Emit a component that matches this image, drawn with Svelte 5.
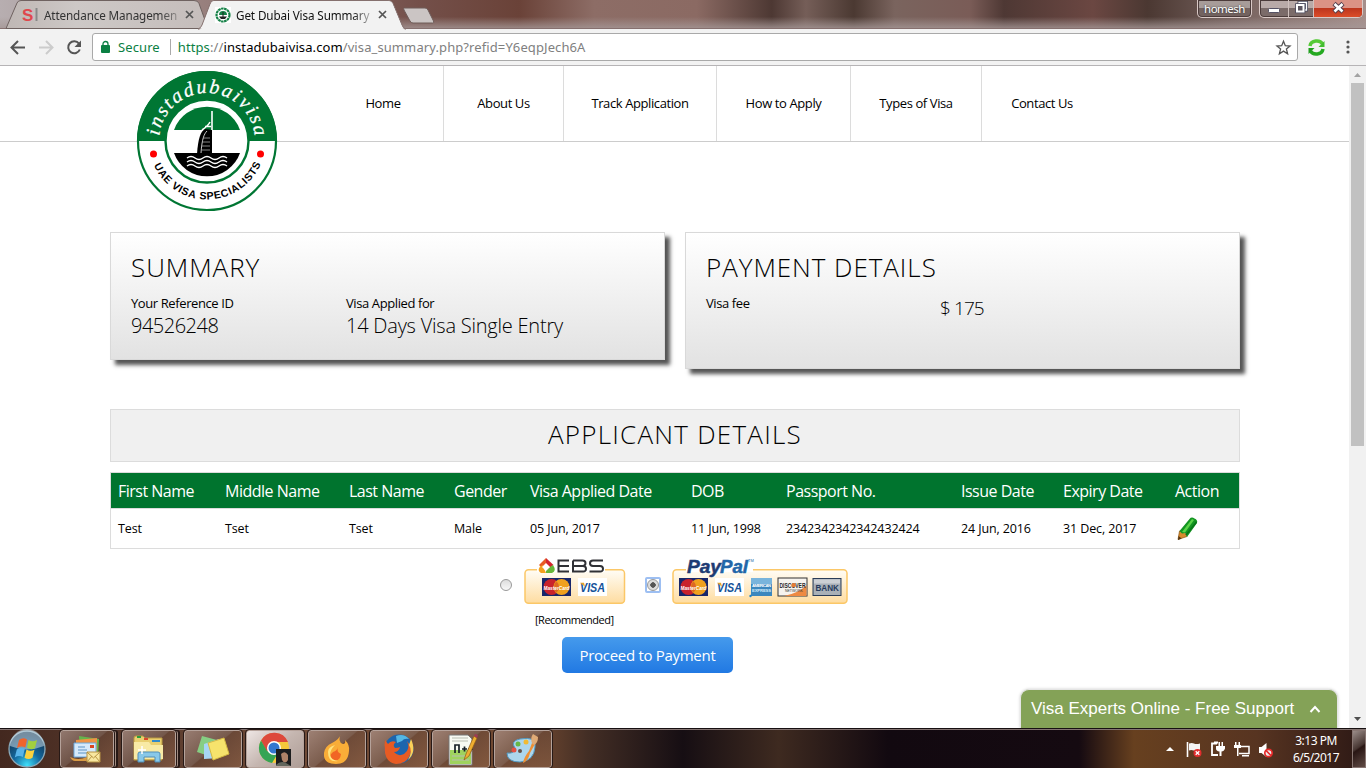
<script>
  const nav = [
    ['Home', 121], ['About Us', 120], ['Track Application', 153],
    ['How to Apply', 134], ['Types of Visa', 131], ['Contact Us', 120]
  ];
  const heads = ['First Name', 'Middle Name', 'Last Name', 'Gender', 'Visa Applied Date', 'DOB', 'Passport No.', 'Issue Date', 'Expiry Date', 'Action'];
  const cells = ['Test', 'Tset', 'Tset', 'Male', '05 Jun, 2017', '11 Jun, 1998', '2342342342342432424', '24 Jun, 2016', '31 Dec, 2017'];
</script>

{#snippet close()}
  <svg class="x" width="9" height="9" viewBox="0 0 9 9"><path d="M1 1l7 7M8 1L1 8" stroke="#555" stroke-width="1.7" /></svg>
{/snippet}

{#snippet master(x, y)}
  <g transform="translate({x} {y})">
    <rect width="29" height="18" fill="#17266b" />
    <circle cx="9.5" cy="9" r="8" fill="#c9222c" /><circle cx="19.5" cy="9" r="8" fill="#f0a01e" />
    <path d="M14.5 3.2a8 8 0 0 1 0 11.6a8 8 0 0 1 0-11.6" fill="#dd6724" />
    <text x="14.5" y="11.5" text-anchor="middle" font-size="6.2" font-style="italic" font-weight="bold" fill="#fff" textLength="26" lengthAdjust="spacingAndGlyphs">MasterCard</text>
  </g>
{/snippet}

{#snippet visa(x, y)}
  <g transform="translate({x} {y})">
    <rect width="29" height="18" fill="#fff" />
    <text x="2" y="13.5" font-size="12" font-style="italic" font-weight="bold" fill="#15539a" textLength="25" lengthAdjust="spacingAndGlyphs">VISA</text>
    <path d="M2 4.8h4l1 4z" fill="#e5a52b" />
  </g>
{/snippet}

<div class="screen">
  <div class="tabstrip">
    <svg class="tabs" width="450" height="29" viewBox="0 0 450 29">
      <defs>
        <linearGradient id="tabfill"><stop offset="0" stop-color="#bfb7b4" /><stop offset=".35" stop-color="#cdc8c6" /><stop offset="1" stop-color="#c5bdbb" /></linearGradient>
      </defs>
      <path d="M6 28.500L17 3q1-2.500 4-2.500H194q4 0 5 3L208 28.500z" fill="url(#tabfill)" stroke="#6f6260" />
      <path d="M198 29Q201 28 202 25L210 4q1-3.500 4-3.500H388q4 0 5 3L402 25q1 3.500 4 4z" fill="#f2f2f2" stroke="#85706e" />
      <path d="M199 30Q203 28 205 23L211 4q1-3 4-3H388q3 0 4.500 3L401 25q1 4 5 5z" fill="#f2f2f2" />
      <path d="M404.500 8H425q2 0 3 2l5.500 11q1 2-1 2H413q-2 0-3-2L404 10q-1-2 .5-2z" fill="#cbc5c4" stroke="#6e5c59" />
    </svg>
    <div class="tab first">
      <svg width="17" height="16" viewBox="0 0 17 16"><text x="0" y="13.500" font-size="17" font-weight="bold" fill="#e0474c" font-family="Liberation Sans">S</text><path d="M14.500 1v13" stroke="#888" stroke-width="2" /></svg>
      <span class="tabname">Attendance Managemen</span>{@render close()}
    </div>
    <div class="tab second">
      <svg width="16" height="16" viewBox="0 0 16 16"><rect width="16" height="16" fill="#fff" /><circle cx="8" cy="8" r="6.500" fill="#fff" stroke="#168047" stroke-width="2.200" stroke-dasharray="2.600 .5" /><path d="M4 8a4 4 0 0 1 8 0z" fill="#168047" /><path d="M4 9.500h8l-2 2.500H6zM7.500 5h1v5h-1z" fill="#222" /></svg>
      <span class="tabname active">Get Dubai Visa Summary</span>{@render close()}
    </div>
    <div class="winctl">
      <span class="user">homesh</span>
      <div class="btns">
        <span class="wb min"><svg width="12" height="5"><rect x=".5" y=".5" width="11" height="4" rx="1" fill="#fff" stroke="#565366" /></svg></span>
        <span class="wb max"><svg width="13" height="13" viewBox="0 0 13 13"><path d="M4 1.500h7.500V9H4z" fill="none" stroke="#4d4c60" stroke-width="3" /><path d="M4 1.500h7.500V9H4z" fill="none" stroke="#fff" stroke-width="1.300" /><path d="M2 4h6.500v6.500H2z" fill="#82777b" stroke="#4d4c60" stroke-width="3.600" /><path d="M2 4h6.500v6.500H2z" fill="#5c5560" stroke="#fff" stroke-width="2" /></svg></span>
        <span class="wb cls"><svg width="13" height="12" viewBox="0 0 13 12"><path d="M2 1.500l9 8.500M11 1.500L2 10" stroke="#56404e" stroke-width="4.500" /><path d="M2.500 2l8 7.500M10.500 2l-8 7.500" stroke="#fff" stroke-width="2.600" /></svg></span>
      </div>
    </div>
  </div>

  <div class="toolbar">
    <svg width="92" height="37" viewBox="0 28 92 37" fill="none" stroke="#555" stroke-width="2">
      <path d="M25 46.500H12M18 40l-6.500 6.500L18 53" />
      <path d="M39 46.500h13M46 40l6.500 6.500L46 53" stroke="#ccc" />
      <path d="M79 42.700A6 6 0 1 0 79.800 48.500" /><path d="M81 39.500V46h-6.500z" fill="#555" stroke="none" />
    </svg>
    <div class="omnibox">
      <svg width="9" height="12" viewBox="0 0 9 12"><rect y="4" width="9" height="8" rx="1" fill="#0b8043" /><path d="M2 5V3a2.500 2.500 0 0 1 5 0v2" fill="none" stroke="#0b8043" stroke-width="1.300" /></svg>
      <span class="secure">Secure</span>
      <span class="url"><b class="g">https</b><i>://</i>instadubaivisa.com<i>/visa_summary.php?refid=Y6eqpJech6A</i></span>
      <svg class="star" width="15" height="15" viewBox="0 0 15 15"><path d="M7.500 1.300l1.800 4.400 4.700.3-3.600 3 1.200 4.700-4.100-2.600-4.100 2.600 1.200-4.700L1 6l4.700-.3z" fill="none" stroke="#555" stroke-width="1.300" /></svg>
    </div>
    <svg class="ext" width="17" height="17" viewBox="0 0 17 17"><g fill="none" stroke-width="3.500"><path d="M2 7C3 1 12 .5 14.500 5" stroke="#55c936" /><path d="M15 10C14 16 5 16.500 2.500 12" stroke="#25a921" /></g><path d="M16.500 2v6H10.500z" fill="#42bd2f" /><path d="M.5 15V9h6z" fill="#1f9e1d" /></svg>
    <svg class="dots" width="4" height="14" fill="#555"><circle cx="2" cy="2" r="1.600" /><circle cx="2" cy="7" r="1.600" /><circle cx="2" cy="12" r="1.600" /></svg>
  </div>

  <div class="viewport">
    <div class="page">
      <header>
        <div class="brand">
          <svg class="logo" width="142" height="142" viewBox="-71 -71 142 142">
            <defs>
              <path id="arcTop" d="M-48 0A48 48 0 0 1 48 0" />
              <path id="arcBottom" d="M-58.500 0A58.500 58.500 0 0 0 58.500 0" />
            </defs>
            <circle r="69" fill="#fff" stroke="#007633" stroke-width="2.200" />
            <path d="M-70 0A70 70 0 0 1 70 0z" fill="#007633" />
            <circle r="41.500" fill="#fff" stroke="#007633" stroke-width="2.400" />
            <path d="M-33 -11A35 35 0 0 1 33 -11z" fill="#007633" />
            <path d="M-33 12H33A35 35 0 0 1 -33 12z" fill="#000" />
            <path d="M-10 13C-9-3-6-10-2-12L5-11V13z" fill="#000" />
            <path d="M-6 12C-5-2-3-7 0-10" fill="none" stroke="#fff" stroke-width=".8" />
            <path d="M-4-3h7M-5 1H3M-5 5H3M-5 9H3" stroke="#aaa" stroke-width=".8" />
            <path d="M-5-11Q1-15 3-19M5-30V-11M-2-14.500h6" fill="none" stroke="#fff" stroke-width="1.600" />
            <path d="M-20 17q4-3 8 0t8 0 8 0 8 0 8 0M-20 21q4-3 8 0t8 0 8 0 8 0 8 0M-20 25q4-3 8 0t8 0 8 0 8 0 8 0" fill="none" stroke="#fff" stroke-width="1.400" />
            <circle cx="-53.500" cy="13" r="3.500" fill="#f00" /><circle cx="53.500" cy="13" r="3.500" fill="#f00" />
            <text class="script"><textPath href="#arcTop" startOffset="5" textLength="141">instadubaivisa</textPath></text>
            <text class="spec"><textPath href="#arcBottom" startOffset="25" textLength="135">UAE VISA SPECIALISTS</textPath></text>
          </svg>
        </div>
        <nav>
          {#each nav as [label, w]}
            <a href="#top" style:width="{w}px"><span>{label}</span></a>
          {/each}
        </nav>
      </header>

      <div class="cards">
        <section class="card">
          <h2>SUMMARY</h2>
          <div class="cols">
            <div class="ref"><p>Your Reference ID</p><strong class="num">94526248</strong></div>
            <div><p>Visa Applied for</p><strong>14 Days Visa Single Entry</strong></div>
          </div>
        </section>
        <section class="card tall">
          <h2>PAYMENT DETAILS</h2>
          <div class="cols">
            <div class="fee"><p>Visa fee</p></div>
            <div><strong class="amount">$ 175</strong></div>
          </div>
        </section>
      </div>

      <h2 class="bar">APPLICANT DETAILS</h2>

      <div class="table">
        <div class="row head">{#each heads as h}<span>{h}</span>{/each}</div>
        <div class="row">
          {#each cells as c}<span class="cell">{c}</span>{/each}
          <span class="pencil"><svg width="22" height="24" viewBox="0 0 22 24"><path d="M1 22.500L2.500 14l5.500 1 2 4.500z" fill="#d78b2d" stroke="#895414" stroke-width=".7" /><path d="M1 23l.6-4 3 2.600z" fill="#523410" /><path d="M2.500 14L12.500 2q2-2.500 5-.5 3.500 1.500 2.500 4.500L10 20l-1.500-4-3.500.5z" fill="#139522" /><path d="M5 15L15 2l2 1L8 15.500z" fill="#5bd348" /><path d="M9 18L19.500 5" stroke="#087518" stroke-width="1.500" /></svg></span>
        </div>
      </div>

      <div class="pay">
        <span class="radio"></span>
        <svg class="ebs" width="102" height="48" viewBox="0 0 102 48">
          <defs><linearGradient id="cream" x2="0" y2="1"><stop offset="0" stop-color="#fffdf7" /><stop offset="1" stop-color="#fedca0" /></linearGradient></defs>
          <rect x="1" y="12.700" width="99.500" height="33.500" rx="3.500" fill="url(#cream)" stroke="#fbc767" stroke-width="1.500" />
          <path d="M13 9h68v6H13z" fill="#fff" />
          <path d="M22 1L15 8l3 3 4-4z" fill="#e85b25" /><path d="M22 1l7.500 7-3.500 2.500L22 7z" fill="#d4262d" /><path d="M16 9.500l3-1.500 1.500 4.500L22 16h-5q-4-2-1-6.500z" fill="#f3a01f" /><path d="M29 8q4 6-1 8h-6V12l4-2z" fill="#67b63a" /><path d="M22 6l4 4-4 4-4-4z" fill="#fff" />
          <path d="M45 3.500H34.500v11H45M34.500 9H45M49 3.500h9.500q3 0 3 2.700T58.500 9H49V3.500M49 9h10q3 0 3 2.800t-3 2.700H49V9M79 3.500H69q-3 0-3 2.700T69 9h7q3 0 3 2.800t-3 2.700H65.500" fill="none" stroke="#303136" stroke-width="2" />
          {@render master(18, 21)}{@render visa(54, 21)}
        </svg>
        <span class="radio on"></span>
        <svg class="paypal" width="176" height="48" viewBox="0 0 176 48">
          <rect x="1" y="12.700" width="174" height="33.500" rx="3.500" fill="url(#cream)" stroke="#fbc767" stroke-width="1.500" />
          <path d="M14 9h67v6H14z" fill="#fff" />
          <text x="15" y="15.500" font-size="18.500" font-style="italic" font-weight="bold" fill="#1d3b73" stroke="#1d3b73" stroke-width=".5" textLength="34" lengthAdjust="spacingAndGlyphs">Pay</text>
          <text x="48" y="15.500" font-size="18.500" font-style="italic" font-weight="bold" fill="#2166a8" stroke="#2166a8" stroke-width=".5" textLength="28" lengthAdjust="spacingAndGlyphs">Pal</text>
          <text x="76" y="5" font-size="4" fill="#2166a8">TM</text>
          {@render master(7, 21)}{@render visa(43, 21)}
          <g transform="translate(0 -1)">
          <rect x="79" y="22" width="21" height="18" fill="#3b87be" /><path d="M79 22h21v6H79z" fill="#78b4dc" /><text x="80" y="31" font-size="4.200" font-weight="bold" fill="#fff" textLength="19">AMERICAN</text><text x="80" y="36" font-size="4.200" font-weight="bold" fill="#d7edfb" textLength="19">EXPRESS</text><circle cx="78.500" cy="40" r="1.200" fill="#2585c7" />
          <rect x="106" y="22" width="29" height="18" fill="#f6f3ee" stroke="#333" /><path d="M112 40Q127 37 134.500 29v11z" fill="#ee8a42" /><text x="107.500" y="31.500" font-size="6.500" font-weight="bold" fill="#29282a" textLength="26" lengthAdjust="spacingAndGlyphs">DISCOVER</text><circle cx="121.700" cy="29.200" r="2.100" fill="#e67b35" /><text x="113" y="36" font-size="3.500" fill="#333">NETWORK</text>
          <rect x="141" y="22.500" width="28" height="17" fill="#a9b0b7" stroke="#293c58" /><path d="M142 23.500h26v4h-26z" fill="#ccd0d4" /><text x="143.500" y="34.500" font-size="8.500" font-weight="bold" fill="#263b5d" textLength="23.500" lengthAdjust="spacingAndGlyphs">BANK</text>
          </g>
        </svg>
      </div>
      <div class="rec">[Recommended]</div>
      <button class="proceed"><span>Proceed to Payment</span></button>

      <div class="chat"><span>Visa Experts Online - Free Support</span>
        <svg width="12" height="8"><path d="M1.500 7L6 2l4.500 5" fill="none" stroke="#fff" stroke-width="2" /></svg>
      </div>
    </div>
    <div class="scroll"><svg width="17" height="17"><path d="M5 11h7L8.500 7z" fill="#a3a3a3" /></svg><div class="thumb"></div><svg width="17" height="17"><path d="M5 6h7l-3.500 4z" fill="#505050" /></svg></div>
  </div>

  <div class="taskbar">
    <svg class="orb" width="60" height="40" viewBox="0 0 60 40">
      <defs><radialGradient id="orbfill" cx=".5" cy=".95" r=".85"><stop offset="0" stop-color="#3fe0fa" /><stop offset=".45" stop-color="#13699f" /><stop offset="1" stop-color="#12324f" /></radialGradient></defs>
      <circle cx="27" cy="20" r="18" fill="url(#orbfill)" stroke="#8aa9b9" stroke-width="1.300" />
      <path d="M10 17A17 17 0 0 1 44 17Q27 24 10 17z" fill="#d7eaf3" opacity=".5" />
      <path d="M19 11q4-3 8-.5l-1.700 8q-4-2-8.300.5z" fill="#ef642d" /><path d="M28.500 11q4 2.500 8.500 0l-2 8q-4 2.500-8-.2z" fill="#a1cf3f" /><path d="M16.800 20.500q4-2.500 8-.5l-2 8q-4-2-8 .5z" fill="#58b4e9" /><path d="M26.500 20.500q4 2.500 8 .2l-2 8q-4 2.500-8 0z" fill="#fbd13e" />
    </svg>
    <div class="task stack"><svg width="34" height="32" viewBox="0 0 34 32"><path d="M9 3l20 3-1 18-18-4z" fill="#65b44c" /><path d="M6 7l21-2v17H6z" fill="#ee9344" /><path d="M4 10h22v14H4z" fill="#d6eafa" stroke="#6aa9dd" /><path d="M20 12h4v3h-4z" fill="#d94723" /><path d="M8 14h7M8 17h9M8 20h9" stroke="#5c93c4" /><path d="M0 24q8 4 17 0v4H5q-3 0-5-4z" fill="#d99b45" /><path d="M17 19h13v10H17z" fill="#f8e7a0" stroke="#b89444" /><path d="M17 19l6.500 6 6.500-6M17 29l5-6M30 29l-5-6" fill="none" stroke="#b89444" /></svg></div>
    <div class="task stack"><svg width="34" height="32" viewBox="0 0 34 32"><path d="M2 5q0-2 2-2h7l2 2h17v22H2z" fill="#e9cf70" stroke="#b99941" /><path d="M5 3h4v2H5z" fill="#2d9d3d" /><path d="M12 5h4v2h-4z" fill="#d9482d" /><path d="M20 7h8v2h-8z" fill="#318acb" /><path d="M2 9h15l2 3h12v14H2z" fill="#f8eaa5" /><path d="M6 29V21q0-2 2-2h18q2 0 2 2v8h-5v-5H12v5z" fill="#88c8e8" stroke="#508eb7" /><path d="M10 13v8M6 17h8" stroke="#fff" stroke-width="1.500" /></svg></div>
    <div class="task wide"><svg width="34" height="32" viewBox="0 0 34 32"><path d="M6 3l15 4-5 17-15-5z" fill="#86ce83" /><path d="M8 11l15-5v19l-15 1z" fill="#a7d5f4" /><path d="M12 10l16-5 5 16-16 6z" fill="#f6e36c" stroke="#d5b942" /></svg></div>
    <div class="task wide lit"><svg width="34" height="34" viewBox="0 0 34 34"><circle cx="16" cy="16" r="15" fill="#f5c83b" /><path d="M3 8.500A15 15 0 0 1 30 10H16L9 20z" fill="#dd493b" /><path d="M3 8.500A15 15 0 0 0 14 31L20 21 9 19z" fill="#35a455" /><circle cx="16" cy="16" r="7" fill="#fff" /><circle cx="16" cy="16" r="5.500" fill="#3277cf" /><path d="M18 17h15v17H18z" fill="#1c1d1e" /><path d="M23 22q4-4 7 1v5q-3 5-6 0z" fill="#af8267" /><path d="M18 33q5-5 10-2l5 3H18z" fill="#62665c" /></svg></div>
    <div class="task wide"><svg width="34" height="32" viewBox="0 0 34 32"><path d="M21 0q-4 9 2 11 3 0 2-4 5 5 4 11-1 13-13 13Q3 31 4 20 5 13 12 10 20 6 21 0z" fill="#f9ad38" /><path d="M18 14q-2 5 3 7-1 8-8 6-5-4 0-8 4-1 5-5z" fill="#f16524" /><path d="M8 19q0-5 7-7-5 5-5 10 1 5 8 6-10 2-10-9z" fill="#ffe37c" /></svg></div>
    <div class="task wide"><svg width="34" height="32" viewBox="0 0 34 32"><circle cx="17" cy="16" r="14.500" fill="#1d65ad" /><path d="M14 3q8-3 13 3-5-1-7 2l-5 2z" fill="#55b7e4" /><path d="M3 7l3 4q3-4 8-2-4 3-1 6 3 0 5-1-1 5-6 5 4 5 10 2 7-5 3-13 7 8 2 16-4 7-13 7Q0 29 3 7z" fill="#e75b23" /><path d="M29 6q6 13-3 21 5-9 1-15z" fill="#fbd057" /></svg></div>
    <div class="task wide"><svg width="34" height="34" viewBox="0 0 34 34"><path d="M5 3h19l4 4v26H5z" fill="#f7faf3" stroke="#777" /><path d="M6 18h21v14H6z" fill="#9fd35e" /><path d="M8 6h16M8 9h16M8 24h17M8 28h17" stroke="#b8bdb2" /><path d="M11 21v-8h4v8M18 17h5M20.500 14.500v5M24 17h5M26.500 14.500v5" fill="none" stroke="#172027" stroke-width="1.700" /><path d="M20 28l2-6L30 4l3 2-8 18z" fill="#eeae30" stroke="#8f5b17" stroke-width=".7" /><path d="M30 4l1-2 3 1-1 3z" fill="#9e3a55" /></svg></div>
    <div class="task wide"><svg width="34" height="32" viewBox="0 0 34 32"><path d="M14 6q17-3 15 8-1 14-15 15-13 0-13-9 8 1 8-5-5-7 5-9z" fill="#add6ed" stroke="#5299c1" /><circle cx="8" cy="17" r="2.500" fill="#e35145" /><circle cx="12" cy="11" r="2.500" fill="#68b846" /><circle cx="20" cy="9" r="2.500" fill="#f2ba32" /><circle cx="14" cy="18" r="2" fill="#64524a" /><path d="M17 30q1-6 6-12l3-8 3 1-5 9q-2 8-7 10z" fill="#ee9035" /><path d="M26 10q-2-5 1-9l5 3q0 6-4 8z" fill="#dfaa76" /></svg></div>
    <div class="tray">
      <svg width="108" height="24" viewBox="0 0 108 24">
        <path d="M1 14l4-4 4 4z" fill="#fff" />
        <path d="M22.500 5v15" stroke="#fff" stroke-width="1.600" /><path d="M24 6.500q3-1 5 0t6 0v7q-3 1-6 0t-5 0z" fill="#f4f4f4" />
        <path d="M52 6.500h-5v11.500h6" fill="none" stroke="#fff" stroke-width="1.800" /><path d="M49 4.500h4v2h-4zM53.500 5h1.500v4h-1.500zM56.500 5H58v4h-1.500zM51 9h9v2.500q-1 3-3.500 3V19h-2v-4.500Q51 14 51 11.500z" fill="#fff" />
        <path d="M76 9.500h8v7H74" fill="none" stroke="#fff" stroke-width="1.500" /><path d="M77 18h7v1.500h-7zM70 5h1.500v3H70zM73.500 5H75v3h-1.500zM69 8h7v3h-2.500v8H72v-8h-3z" fill="#fff" />
        <path d="M94 10h2.500l5-4v14l-5-4H94z" fill="#fff" />
        <circle cx="32.500" cy="16" r="4" fill="#e22d2d" /><path d="M30.700 14.200l3.600 3.600M34.300 14.200l-3.600 3.600" stroke="#fff" stroke-width="1.300" />
        <circle cx="103.500" cy="16" r="3.700" fill="#eee" stroke="#e52a2a" stroke-width="1.700" /><path d="M101 13.500l5 5" stroke="#e52a2a" stroke-width="1.700" />
      </svg>
      <div class="clock"><span>3:13 PM</span><span>6/5/2017</span></div>
    </div>
    <div class="desk"></div>
  </div>
</div>

<style>
  :global(body) { overflow: hidden; }
  * { box-sizing: border-box; }
  svg { display: block; flex: none; overflow: visible; }
  .screen { width: 1366px; height: 768px; display: flex; flex-direction: column; background: #fff; color: #000; overflow: hidden; font-family: "Open Sans", "Noto Sans", sans-serif; }
  .tabstrip { height: 29px; flex: none; position: relative; display: flex; border-bottom: 1px solid #86706f; background: linear-gradient(180deg, #a08f8f00 60%, #a59796cc), linear-gradient(90deg, #b7aeb0 0, #8d706c 20%, #74504a 30.500%, #6a4238 38%, #8d6d66 43.500%, #8b6a63 51%, #4d3833 56.500%, #755e58 59%, #4b3932 62.500%, #7a645e 65.500%, #7a5c57 71%, #4e3834 73.500%, #6b4742 80%, #4b3832 84%, #74605c 90%, #a68f8b 100%); }
  .tabs { position: absolute; left: 0; top: 0; }
  .tab { position: relative; display: flex; align-items: center; height: 29px; font: 11.700px "Noto Sans", sans-serif; letter-spacing: -.12px; }
  .first { padding-left: 22px; width: 194px; } .second { padding-left: 21px; width: 193px; }
  .tabname { width: 135px; margin-left: 5px; white-space: nowrap; color: #333; mask-image: linear-gradient(90deg, #000 86%, #0004); }
  .second .tabname { color: #111; }
  .x { margin-left: auto; }
  .winctl { margin-left: auto; display: flex; align-items: flex-start; padding-right: 3px; gap: 7px; }
  .user, .btns { height: 18px; border: 1px solid #d9c9c6; border-top: 0; border-radius: 0 0 5px 5px; box-shadow: inset 0 0 0 1px #4b3b3a; overflow: hidden; }
  .user { width: 55px; text-align: center; color: #fff; font: 11.500px/17px "Noto Sans", sans-serif; letter-spacing: -.5px; background: linear-gradient(#a79c99 50%, #736360 50%); text-shadow: 0 0 2px #333; }
  .btns { width: 104px; display: flex; background: linear-gradient(#b9aaa8 50%, #7b6b69 50%); }
  .wb { display: grid; place-items: center; padding-bottom: 2px; }
  .min { width: 29px; border-right: 1px solid #d0c1be; } .min svg { margin-top: 5px; }
  .max { width: 26px; border-right: 1px solid #d0c1be; }
  .cls { width: 48px; background: linear-gradient(#db9285 48%, #bd361e 50%, #db4d29); }
  .toolbar { height: 37px; flex: none; background: #f2f2f2; border-bottom: 1px solid #b6b4b6; display: flex; align-items: center; }
  .omnibox { width: 1206px; height: 28px; border: 1px solid #a9a9a9; border-radius: 3px; background: #fff; display: flex; align-items: center; padding: 0 6px 0 8px; font: 13px "Noto Sans", sans-serif; }
  .secure { color: #0b8043; margin-left: 8px; padding-right: 10px; letter-spacing: .1px; border-right: 1px solid #aaa; line-height: 16px; }
  .url { margin-left: 7px; white-space: nowrap; letter-spacing: .1px; } .url i { font-style: normal; color: #808080; } .g { color: #0b8043; font-weight: 400; }
  .star { margin-left: auto; } .ext { margin-left: 10px; } .dots { margin-left: 21px; }
  .viewport { height: 662px; flex: none; display: flex; }
  .page { width: 1349px; position: relative; display: flex; flex-direction: column; align-items: center; overflow: hidden; }
  header { align-self: stretch; height: 76px; flex: none; border-bottom: 1px solid #ccc; display: flex; }
  .brand { width: 323px; padding: 4px 0 0 136px; position: relative; z-index: 2; }
  .script { font: italic 20px "Liberation Serif", serif; fill: #fff; stroke: #fff; stroke-width: .25px; }
  .spec { font: bold 10.500px "Liberation Sans", sans-serif; }
  nav { display: flex; height: 75px; }
  nav a { color: #000; text-decoration: none; border-right: 1px solid #dcdcdc; display: flex; align-items: center; justify-content: center; padding-bottom: 2px; font-size: 13px; letter-spacing: -.4px; white-space: nowrap; }
  nav a:last-child { border: 0; }
  .cards { display: flex; gap: 20px; height: 267px; padding-top: 90px; width: 1130px; align-items: flex-start; margin-left: 1px; }
  .card { width: 555px; height: 128px; border: 1px solid #d9d9d9; background: linear-gradient(#fff, #e2e2e2); box-shadow: 5px 5px 4px #555; padding: 18px 20px; }
  .tall { height: 137px; }
  h2 { margin: 0; font-weight: 300; font-size: 26px; line-height: 32px; letter-spacing: .95px; white-space: nowrap; }
  .cols { display: flex; margin-top: 11px; }
  .cols p { margin: 0; font-size: 13px; line-height: 18px; letter-spacing: -.4px; white-space: nowrap; }
  .cols strong { display: block; font-weight: 300; font-size: 20px; line-height: 27px; white-space: nowrap; letter-spacing: -.22px; }
  .ref { width: 215px; } .fee { width: 234px; } .cols .num { letter-spacing: -.5px; } .cols .amount { font-size: 19px; margin-top: 1px; letter-spacing: -.9px; }
  .bar { width: 1130px; height: 53px; margin-left: 1px; background: #f0f0f0; border: 1px solid #dcdcdc; text-align: center; line-height: 49px; letter-spacing: 1.250px; flex: none; }
  .table { width: 1130px; margin: 10px 0 0 1px; border: 1px solid #dcdcdc; height: 77px; flex: none; }
  .row { display: grid; grid-template-columns: 107px 124px 105px 76px 161px 95px 175px 102px 112px 1fr; height: 40px; align-items: center; padding-left: 7px; font-size: 12.500px; letter-spacing: -.12px; white-space: nowrap; }
  .cell { padding-bottom: 2px; }
  .head { background: #00742e; color: #fff; height: 36px; font-size: 16px; letter-spacing: -.5px; border-bottom: 1px solid #dcdcdc; }
  .pencil { padding-left: 2px; }
  .pay { display: flex; width: 349px; height: 48px; margin-top: 8px; align-items: flex-start; flex: none; }
  .radio { width: 12px; height: 12px; flex: none; margin: 22px 12px 0 0; border: 1px solid #999; border-radius: 50%; background: linear-gradient(#ddd, #f8f8f8); position: relative; }
  .radio.on { margin: 22px 13px 0 21px; background: radial-gradient(#555 35%, #ddd 42%); }
  .radio.on::after { content: ""; position: absolute; inset: -3px; border: 2px solid #9dbff2; border-radius: 2px; }
  .ebs text, .paypal text { font-family: "Liberation Sans", sans-serif; }
  .rec { font-size: 11px; line-height: 16px; margin-top: 7px; width: 349px; padding-left: 35px; letter-spacing: -.5px; }
  .proceed { width: 171px; height: 36px; margin: 9px 54px 0 0; border: 0; border-radius: 5px; background: linear-gradient(#459aec, #2179e3); color: #fff; font: 15px "Open Sans", sans-serif; letter-spacing: -.3px; white-space: nowrap; padding: 0; flex: none; }
  .chat { position: absolute; right: 11px; bottom: 0; width: 318px; height: 39px; background: #84a257; border: 1px solid #e5e5e5; border-bottom: 0; border-radius: 9px 9px 0 0; display: flex; align-items: center; justify-content: space-between; padding: 0 16px 0 10px; color: #fff; font: 17px "Liberation Sans", sans-serif; white-space: nowrap; box-shadow: 0 0 3px #ccc; }
  .scroll { width: 17px; background: #f1f1f1; display: flex; flex-direction: column; }
  .thumb { height: 363px; margin: 0 2px auto; background: #c1c1c1; }
  .taskbar { height: 40px; flex: none; border-top: 1px solid #171011; box-shadow: inset 0 1px #847472; display: flex; align-items: center; background: linear-gradient(90deg, #43281f 0, #5d3d2f 12%, #704b37 22%, #704830 39%, #432e25 43%, #160e13 50%, #3e2a20 57%, #120910 65%, #150a11 79%, #67401f 83%, #573421 92%, #2c1815 100%); }
  .task { width: 54px; height: 38px; border: 1px solid #b5a29a; outline: 1px solid #271916; outline-offset: 0; border-radius: 3px; background: linear-gradient(140deg, #b49b92aa, #83695d99 48%, #6e4c3b88 50%, #93664a88); display: grid; place-items: center; margin-right: 8px; flex: none; overflow: hidden; }
  .stack { box-shadow: 3px 0 0 -1px #a08a80, 4px 0 0 #271916; overflow: visible; }
  .wide { width: 58px; margin-right: 4px; }
  .lit { background: linear-gradient(140deg, #eee6e4, #c5b6b0 50%, #ae9d96); }
  .tray { margin-left: auto; display: flex; align-items: center; gap: 16px; color: #fff; }
  .clock { display: flex; flex-direction: column; align-items: center; font: 12px/17px "Noto Sans", sans-serif; letter-spacing: -.5px; width: 54px; }
  .desk { width: 14px; height: 38px; margin-left: 9px; border: 1px solid #887672; background: linear-gradient(145deg, #9b8d89, #473632 45%, #291614 50%, #604b45); }
</style>
